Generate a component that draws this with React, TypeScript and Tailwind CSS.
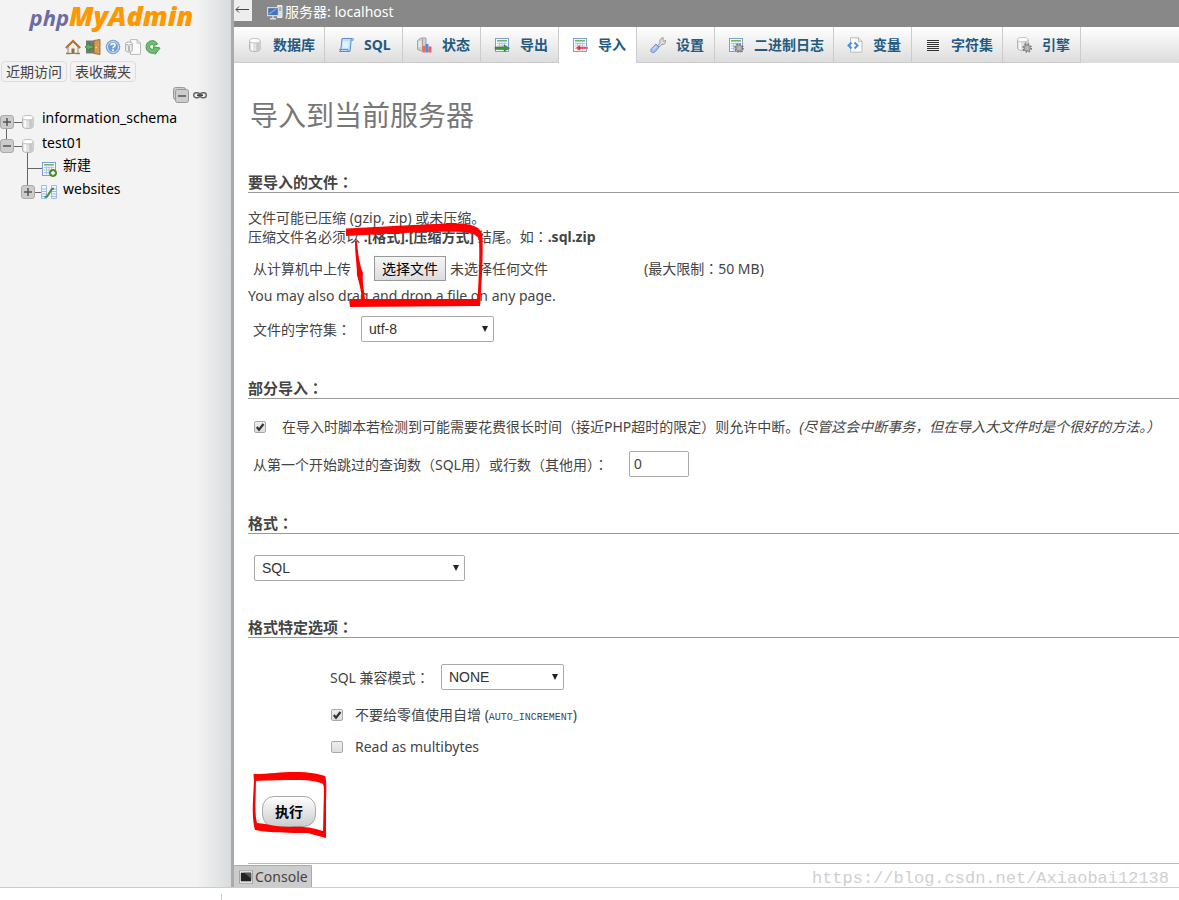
import React, { useRef, useState } from "react";

type IconProps = { className?: string };

function Svg({ children, className = "h-4 w-4" }: { children: React.ReactNode; className?: string }) {
  return (
    <svg viewBox="0 0 16 16" className={`shrink-0 ${className}`} fill="none" aria-hidden="true">
      {children}
    </svg>
  );
}

function Gear({ x, y }: { x: number; y: number }) {
  return (
    <g transform={`translate(${x} ${y})`}>
      <circle r="3.9" stroke="#777" strokeWidth="1.8" strokeDasharray="1.6 1.46" />
      <circle r="3.1" fill="#bbb" stroke="#777" strokeWidth=".8" />
      <circle r="1.2" fill="#f4f4f4" stroke="#777" strokeWidth=".6" />
    </g>
  );
}

function Sheet() {
  return (
    <>
      <rect x="1.5" y="1.5" width="13" height="13" fill="#f3f8ff" stroke="#7f9fd0" />
      <path d="M3 3.8h10" stroke="#74b56b" strokeWidth="1.6" />
      <path d="M3 6.5h10M3 9h10M3 11.5h10M5.5 5.5v8M8 5.5v8M10.5 5.5v8" stroke="#a9c0e2" strokeWidth=".9" />
    </>
  );
}

function Cylinder({ x = 2, y = 1 }: { x?: number; y?: number }) {
  return (
    <g transform={`translate(${x} ${y})`}>
      <path d="M.5 2.8v8.6c0 1.200 2.300 2.100 5.300 2.100s5.300-.9 5.300-2.100V2.800z" fill="#e2e2e2" stroke="#b4b4b4" />
      <path d="M3.200 4.800v7.600" stroke="#fff" strokeWidth="1.600" />
      <path d="M8.600 4.800v7.600" stroke="#c4c4c4" strokeWidth="2.400" />
      <ellipse cx="5.800" cy="2.700" rx="5.300" ry="2.200" fill="#fff" stroke="#c0c0c0" />
    </g>
  );
}

const DatabaseIcon = ({ className }: IconProps) => (
  <Svg className={className}>
    <Cylinder />
  </Svg>
);
const SqlIcon = () => (
  <Svg>
    <path d="M4 1.5h10.5c-1.2.6-1.4 1.5-1.4 3L12 14.5H1.5c1-.5 1.3-1.2 1.4-2.5z" fill="#c3defa" stroke="#5e8fc9" />
    <path d="M12.6 3.2h2.6V1.6M1 12.6h9v2" stroke="#5e8fc9" />
    <path d="M5 4h6l-.8 7H4.4z" fill="#e0f0ff" />
  </Svg>
);
const StatusIcon = () => (
  <Svg>
    <path d="M1.500 3.500l3.500-2.500h5v12l-3 1.500-5.500-2z" fill="#d0d0d0" stroke="#a2a2a2" />
    <path d="M6.500 1.500v12" stroke="#a2a2a2" />
    <path d="M2.500 5h3M2.500 7h3M2.500 9h3" stroke="#fff" />
    <path d="M6.500 9h3v6.500h-3z" fill="#f56a4d" />
    <path d="M9.500 7h3v8.500h-3z" fill="#4b8fe8" />
    <path d="M12.500 9.500H15.500v6h-3z" fill="#f0604a" />
  </Svg>
);
const ExportIcon = () => (
  <Svg>
    <Sheet />
    <path d="M1 10h9V7.800L15.500 11.200 10 14.600v-2.200H1z" fill="#3f9440" stroke="#2e7531" strokeWidth=".5" />
  </Svg>
);
const ImportIcon = () => (
  <Svg>
    <Sheet />
    <path d="M16 9.800H8.500V7.500L3.300 10.900l5.200 3.400V12H16z" fill="#e8333b" stroke="#fff" strokeWidth=".5" />
  </Svg>
);
const SettingsIcon = () => (
  <Svg>
    <path d="M8 8.500L10 5.500C9 3 11 .8 13.300.8L12.800 3.300l1 .9L16 3.500c.2 2.600-2 4.500-4.300 3.900L9.500 10z" fill="#ddd" stroke="#909090" strokeWidth=".9" />
    <path d="M5.800 7.200l3.200 3-4 4.500c-1.100 1.200-2.500 1.200-3.500.3-1-1-.9-2.300.2-3.300z" fill="#a6c3f4" stroke="#6784c4" />
    <path d="M3 12.500l3.300-3.500" stroke="#dce9ff" />
  </Svg>
);
const BinlogIcon = () => (
  <Svg>
    <Sheet />
    <Gear x={11} y={11} />
  </Svg>
);
const VariablesIcon = () => (
  <Svg>
    <path d="M3.500.8h8L15 4.300v10.900H3.500z" fill="#fafafa" stroke="#bbb" />
    <path d="M11.500.8v3.500H15" stroke="#bbb" />
    <path d="M4.500 5.500L1.500 8.500l3 3M7.500 5.500l3 3-3 3" stroke="#4a90dd" strokeWidth="2" />
  </Svg>
);
const CharsetIcon = () => (
  <Svg>
    <path d="M2 3.500h12M2 5.500h12M2 7.500h12M2 9.500h12M2 11.500h12M2 13.500h12" stroke="#333" strokeWidth="1" shapeRendering="crispEdges" />
  </Svg>
);
const EngineIcon = () => (
  <Svg>
    <Cylinder x={1} y={0} />
    <Gear x={11.2} y={11} />
  </Svg>
);
const ServerIcon = () => (
  <Svg>
    <path d="M10.500 1.500h4.500v12h-4.500z" fill="#ddd" stroke="#eee" />
    <path d="M11.500 4h3M11.500 6h3" stroke="#888" />
    <rect x=".6" y="3.600" width="10.800" height="8" fill="#4572b8" stroke="#d6d6d6" strokeWidth="1.200" />
    <path d="M2 10L9 5" stroke="#85aae0" strokeWidth="1.500" />
    <path d="M6 12v2M3 14.800h6" stroke="#ddd" strokeWidth="1.400" />
  </Svg>
);
const HomeIcon = () => (
  <Svg>
    <path d="M3 8l5-5 5 5v6.500H3z" fill="#f4efe6" stroke="#8b8b7a" />
    <path d="M.8 9L8 1.800 15.200 9" stroke="#b6713a" strokeWidth="2" />
    <path d="M6.500 9.500h3v5h-3z" fill="#9a6a3d" />
    <path d="M1 14.500h4.500M10.500 14.500H15" stroke="#5a9b4c" strokeWidth="1.600" />
  </Svg>
);
const LogoutIcon = () => (
  <Svg>
    <path d="M1 1.500h9v13H1z" fill="#777" />
    <path d="M9 1.500l6-1v15l-6-1z" fill="#d99a55" stroke="#8f5d2b" strokeWidth=".8" />
    <path d="M10.500 8.500h1.300" stroke="#ffe3a0" strokeWidth="1.500" />
    <path d="M0 8l4.500-4v2.300H8v3.400H4.500V12z" fill="#5cb855" stroke="#2e7d32" strokeWidth=".7" />
  </Svg>
);
const HelpIcon = () => (
  <Svg>
    <circle cx="8" cy="8" r="6.800" fill="#6f9ddb" stroke="#7f9fcd" />
    <circle cx="8" cy="8" r="5.500" stroke="#d5e4f8" />
    <path d="M6 6.300C6 4 10 4 10 6.300 10 7.800 8 7.600 8 9.200" stroke="#fff" strokeWidth="1.600" />
    <circle cx="8" cy="11.300" r="1" fill="#fff" />
  </Svg>
);
const DocsIcon = () => (
  <Svg>
    <path d="M5.500.6h6.500l3.500 3.500v11.300h-10z" fill="#fafafa" stroke="#bbb" />
    <path d="M12 .6v3.500h3.500" stroke="#bbb" />
    <path d="M.6 4.500v7c0 2 6.600 2 6.600 0v-7z" fill="#eee" stroke="#aaa" />
    <ellipse cx="3.900" cy="4.500" rx="3.300" ry="1.500" fill="#fff" stroke="#aaa" />
    <path d="M4 7v5" stroke="#999" strokeWidth="1.300" />
  </Svg>
);
const ReloadIcon = () => (
  <Svg>
    <path
      d="M12.500 5.200C11.200 1.800 7.500.9 4.500 2.300 1 4 .2 8.500 2 11.300c1.500 2.600 5 3.800 8.300 2.500l-.2 1.500 5-6.300-6.800-1.300.6 2.100c-2 1-4 .2-4.300-1.600C4.300 6 6.800 4.300 8.700 6.500z"
      fill="#6fbd72"
      stroke="#3c9141"
      strokeWidth=".9"
      strokeLinejoin="round"
    />
  </Svg>
);
const NewTableIcon = () => (
  <Svg>
    <Sheet />
    <circle cx="12" cy="12" r="3.600" fill="#5a9b2d" stroke="#3f7320" strokeWidth=".8" />
    <path d="M12 10v4M10 12h4" stroke="#fff" strokeWidth="1.400" />
  </Svg>
);
const TableIcon = () => (
  <Svg>
    <path d="M.5 1.500H5.500v13H.5zM10.500 1.500h5v13h-5z" fill="#f1f7ff" stroke="#9dbbe3" />
    <path d="M1 5h4M1 7.500h4M1 10h4M1 12.500h4M11 5h4M11 7.500h4M11 10h4M11 12.500h4" stroke="#9dbbe3" />
    <path d="M3.500 13L6 12.500 11 5l2-.5" stroke="#43913f" strokeWidth="2" />
  </Svg>
);
const CollapseAllIcon = () => (
  <Svg>
    <rect x=".5" y=".5" width="12" height="12" rx="2" fill="#ccc" stroke="#999" />
    <rect x="2.500" y="2.500" width="13" height="13" rx="2" fill="#ccc" stroke="#999" />
    <path d="M5 9h8" stroke="#555" strokeWidth="1.500" />
  </Svg>
);
const LinkIcon = () => (
  <Svg>
    <rect x="1.700" y="5.700" width="6" height="5" rx="2.500" stroke="#666" strokeWidth="1.400" />
    <rect x="8.300" y="5.700" width="6" height="5" rx="2.500" stroke="#666" strokeWidth="1.400" />
    <path d="M5 8.200h6" stroke="#444" strokeWidth="1.600" />
  </Svg>
);
const ConsoleIcon = () => (
  <Svg className="h-3.5 w-3.5">
    <rect x=".5" y="1" width="15" height="14" fill="#fff" stroke="#999" />
    <path d="M2 3h12v10H2z" fill="#222" />
    <path d="M6 3h8v7z" fill="#555" />
  </Svg>
);

function Expander({ open, label }: { open: boolean; label: string }) {
  return (
    <button type="button" aria-label={label} className="flex h-3.5 w-3.5 shrink-0 items-center justify-center rounded-[3px] border border-[#aaa] bg-[#ccc]">
      <svg viewBox="0 0 8 8" className="h-2 w-2" aria-hidden="true">
        <path d={open ? "M0 4h8" : "M0 4h8M4 0v8"} stroke="#555" strokeWidth="1.500" />
      </svg>
    </button>
  );
}

/* Full-width colon, centred in its em box. */
const Colon = () => <span className="font-['Noto_Sans_CJK_TC',sans-serif]">：</span>;

const tabs = [
  { label: "数据库", icon: <DatabaseIcon /> },
  { label: "SQL", icon: <SqlIcon /> },
  { label: "状态", icon: <StatusIcon /> },
  { label: "导出", icon: <ExportIcon /> },
  { label: "导入", icon: <ImportIcon />, active: true },
  { label: "设置", icon: <SettingsIcon /> },
  { label: "二进制日志", icon: <BinlogIcon /> },
  { label: "变量", icon: <VariablesIcon /> },
  { label: "字符集", icon: <CharsetIcon /> },
  { label: "引擎", icon: <EngineIcon /> },
];

const toolbar = [
  { label: "主页", icon: <HomeIcon /> },
  { label: "退出", icon: <LogoutIcon /> },
  { label: "文档", icon: <HelpIcon /> },
  { label: "手册", icon: <DocsIcon /> },
  { label: "刷新", icon: <ReloadIcon /> },
];

function Sidebar() {
  return (
    <aside className="w-[234px] shrink-0 border-r-[3px] border-[#aaa] bg-linear-to-r from-[#f3f3f3] from-85% to-[#d9dcde] text-black">
      <a href="#home" className="block h-9 pr-2 text-center font-['Open_Sans',sans-serif] text-[27px] leading-8 font-bold italic">
        <span className="text-[22px] text-[#6c6ca3]">php</span>
        <span className="font-extrabold text-[#ff9800]">MyAdmin</span>
      </a>
      <nav className="flex gap-1 pt-[3px] pl-[65px]">
        {toolbar.map((t) => (
          <a key={t.label} href="#nav" aria-label={t.label}>
            {t.icon}
          </a>
        ))}
      </nav>
      <div className="flex gap-[3px] pt-1.5 pl-px text-[#444]">
        {["近期访问", "表收藏夹"].map((t) => (
          <button key={t} type="button" className="h-[21px] rounded border border-[#ddd] bg-[#f2f2f2] px-1 leading-[19px]">
            {t}
          </button>
        ))}
      </div>
      <div className="flex gap-[3px] pt-[5px] pl-[173px]">
        <button type="button" aria-label="全部折叠">
          <CollapseAllIcon />
        </button>
        <button type="button" aria-label="取消与主面板的链接">
          <LinkIcon />
        </button>
      </div>
      <div className="relative mt-[7px]">
        <svg className="absolute top-0 left-0 h-24 w-14" viewBox="0 0 56 96" fill="none" stroke="#666" shapeRendering="crispEdges" aria-hidden="true">
          <path d="M6.500 12v24M6 12.500h18M6 36.500h18M27.500 40v42M27 58.500h16M27 82.500h16" />
        </svg>
        <ul className="relative">
          <li className="flex h-6 items-center">
            <Expander open={false} label="展开 information_schema" />
            <DatabaseIcon className="ml-1.5 h-4 w-4" />
            <a href="#information_schema" className="pb-2 pl-1.5">information_schema</a>
          </li>
          <li className="flex h-6 items-center">
            <Expander open label="折叠 test01" />
            <DatabaseIcon className="ml-1.5 h-4 w-4" />
            <a href="#test01" className="pb-1.5 pl-1.5">test01</a>
          </li>
          <li className="flex h-[22px] items-center pl-[41px]">
            <NewTableIcon />
            <a href="#new" className="pb-2 pl-1.5">新建</a>
          </li>
          <li className="flex h-6 items-center pl-[21px]">
            <Expander open={false} label="展开 websites" />
            <span className="pl-1.5">
              <TableIcon />
            </span>
            <a href="#websites" className="pb-1.5 pl-1.5">websites</a>
          </li>
        </ul>
      </div>
    </aside>
  );
}

function Legend({ children }: { children: React.ReactNode }) {
  return (
    <h3 className="border-b border-[#999] text-[15px] leading-5 font-bold">
      {children}
      <Colon />
    </h3>
  );
}

function Select({ id, value, className }: { id: string; value: string; className: string }) {
  return (
    <span className={`relative inline-block ${className}`}>
      <select id={id} aria-label={id} className="block h-[26px] w-full appearance-none rounded-xs border border-[#aaa] bg-white px-[7px] font-['Liberation_Sans',sans-serif] text-sm text-[#333]">
        <option>{value}</option>
      </select>
      <svg viewBox="0 0 6 6" className="pointer-events-none absolute top-2.5 right-1.5 h-1.5 w-1.5" aria-hidden="true">
        <path d="M0 0h6L3 6z" fill="#222" />
      </svg>
    </span>
  );
}

function Checkbox({ id, checked = false }: { id: string; checked?: boolean }) {
  return (
    <span className="relative block h-3 w-3 shrink-0">
      <input id={id} type="checkbox" defaultChecked={checked} className="peer block h-3 w-3 appearance-none rounded-xs border border-[#aaa] bg-linear-to-b from-[#eee] to-[#ddd]" />
      <svg viewBox="0 0 12 12" className="pointer-events-none absolute inset-0 hidden h-3 w-3 peer-checked:block" aria-hidden="true">
        <path d="M2.800 6l2.200 2.700L9.500 3" fill="none" stroke="#333" strokeWidth="2.200" />
      </svg>
    </span>
  );
}

function ImportForm() {
  const file = useRef<HTMLInputElement>(null);
  const [name, setName] = useState("未选择任何文件");
  return (
    <form className="pl-3.5" onSubmit={(e) => e.preventDefault()}>
      <h2 className="pt-8 pl-0.5 text-[28px] leading-10 text-[#777]">导入到当前服务器</h2>

      <section className="pt-[37px]">
        <Legend>要导入的文件</Legend>
        <p className="pt-[15px] leading-[19px]">
          文件可能已压缩 (gzip, zip) 或未压缩。
          <br />
          压缩文件名必须以 <b>.[格式].[压缩方式]</b> 结尾。如<Colon />
          <b>.sql.zip</b>
        </p>
        <div className="flex items-center pt-2.5 pl-[5px]">
          <label htmlFor="upload" className="w-[121px]">从计算机中上传<Colon /></label>
          <input ref={file} id="upload" type="file" className="sr-only" onChange={(e) => setName(e.target.files?.[0]?.name ?? "未选择任何文件")} />
          <button type="button" onClick={() => file.current?.click()} className="h-[25px] border border-[#999] bg-linear-to-b from-[#f5f5f5] to-[#ddd] px-[7px] leading-5 text-black">
            选择文件
          </button>
          <span className="w-[198px] pl-1">{name}</span>
          <span>(最大限制<Colon />50 MB)</span>
        </div>
        <p className="pt-[5px]">You may also drag and drop a file on any page.</p>
        <div className="flex items-center pt-2.5 pl-[5px]">
          <label htmlFor="charset" className="w-[108px]">文件的字符集<Colon /></label>
          <Select id="charset" value="utf-8" className="w-[133px]" />
        </div>
      </section>

      <section className="pt-9">
        <Legend>部分导入</Legend>
        <div className="flex items-center gap-4 pt-[18px] pl-1.5">
          <Checkbox id="interrupt" checked />
          <label htmlFor="interrupt" className="whitespace-nowrap">
            在导入时脚本若检测到可能需要花费很长时间（接近PHP超时的限定）则允许中断。<i>(尽管这会中断事务，但在导入大文件时是个很好的方法。）</i>
          </label>
        </div>
        <div className="flex items-center pt-3.5 pl-[5px]">
          <label htmlFor="skip" className="w-[376px]">从第一个开始跳过的查询数（SQL用）或行数（其他用）<Colon /></label>
          <input id="skip" type="text" defaultValue="0" className="h-[26px] w-[60px] rounded-xs border border-[#aaa] px-1 font-['Liberation_Sans',sans-serif] text-sm" />
        </div>
      </section>

      <section className="pt-9">
        <Legend>格式</Legend>
        <div className="flex pt-[21px] pl-1.5">
          <Select id="format" value="SQL" className="w-[211px]" />
        </div>
      </section>

      <section className="pt-9">
        <Legend>格式特定选项</Legend>
        <div className="flex items-center pt-[26px] pl-[82px]">
          <label htmlFor="compat" className="w-[111px]">SQL 兼容模式<Colon /></label>
          <Select id="compat" value="NONE" className="w-[123px]" />
        </div>
        <div className="flex h-[35px] items-center gap-3 pt-[15px] pl-[83px]">
          <Checkbox id="zero" checked />
          <label htmlFor="zero">
            不要给零值使用自增 (<code className="font-['Liberation_Mono',monospace] text-[10px] leading-none">AUTO_INCREMENT</code>)
          </label>
        </div>
        <div className="flex items-center gap-3 pt-3 pl-[83px]">
          <Checkbox id="multibytes" />
          <label htmlFor="multibytes">Read as multibytes</label>
        </div>
      </section>

      <div className="border-b border-[#bbb] pt-[39px] pb-9 pl-3.5">
        <button type="submit" className="h-[31px] rounded-xl border border-[#aaa] bg-linear-to-b from-white to-[#ccc] px-3 font-semibold text-black">
          执行
        </button>
      </div>
    </form>
  );
}

export default function App() {
  return (
    <div className="flex min-h-screen flex-col bg-white font-['Noto_Sans','Noto_Sans_CJK_SC',sans-serif] text-sm leading-5 text-[#444]">
      <div className="relative flex flex-1 border-b border-[#ccc]">
        <Sidebar />
        <main className="flex min-w-0 flex-1 flex-col">
          <header className="flex h-[27px] items-start bg-[#888] text-white">
            <button type="button" aria-label="隐藏面板" className="h-[21px] w-[18px] bg-[#eee] text-black">
              <svg viewBox="0 0 18 21" className="h-[21px] w-[18px]" fill="none" stroke="#444" aria-hidden="true">
                <path d="M2 9.500h13M5 6.500l-3 3 3 3" />
              </svg>
            </button>
            <a href="#server" className="flex items-center pt-0.5 pl-[15px]">
              <ServerIcon />
              <span className="pl-0.5">服务器: localhost</span>
            </a>
          </header>
          <nav className="flex h-9 bg-linear-to-b from-white to-[#dcdcdc]">
            {tabs.map((t) => (
              <a
                key={t.label}
                href="#tab"
                className={`flex min-w-[78px] items-center gap-2.5 border-r border-[#ccc] pr-[9px] pl-[13px] font-bold whitespace-nowrap text-[#235a81] ${t.active ? "bg-white" : "border-b"}`}
              >
                {t.icon}
                {t.label}
              </a>
            ))}
          </nav>
          <ImportForm />
          <div className="mt-auto flex">
            <button type="button" className="flex h-[22px] items-center gap-0.5 rounded-tr-xs border-t border-r border-[#aaa] bg-[#ccc] pr-[3px] pl-[5px]">
              <ConsoleIcon />
              Console
            </button>
          </div>
        </main>
        <svg className="pointer-events-none absolute top-[220px] left-[340px] h-[90px] w-[150px]" viewBox="340 220 150 90" fill="#f00" aria-hidden="true">
          <path d="M346 228.500C380 227 430 223.500 462 223.500Q480 225 482 234Q484 250 480 306L350 307L349 299L477.500 299Q480 260 479 240Q477 233 464 232C430 231 390 234 346 236Z" />
          <path d="M355 241L357 241C358 255 360 266 363 273C362 281 364 290 365 299L362 299C361 290 359 282 357 275C357 265 355 255 355 241Z" />
        </svg>
        <svg className="pointer-events-none absolute top-[770px] left-[250px] h-[70px] w-[80px]" viewBox="250 770 80 70" fill="#f00" aria-hidden="true">
          <path d="M253.500 774C270 774 280 772 295 772C310 772 318 774 325 776Q327 780 326 800L326 838C318 836 312 834 308 833C290 833 270 833 255 830Q252 820 253 800L254 780L256 780L255.500 801Q255 815 257 823C270 824 275 827 290 827C308 826 315 829 323 831L324 790Q324 783 321 783C308 779 290 780 254 781Z" />
        </svg>
        <p className="pointer-events-none absolute right-2.5 -bottom-1 font-['Liberation_Mono',monospace] text-[17px] leading-6 text-[#d0d0d0]">
          https://blog.csdn.net/Axiaobai12138
        </p>
      </div>
      <footer className="flex h-3 items-end">
        <span className="ml-[221px] h-1.5 w-px bg-[#ccc]" />
      </footer>
    </div>
  );
}
